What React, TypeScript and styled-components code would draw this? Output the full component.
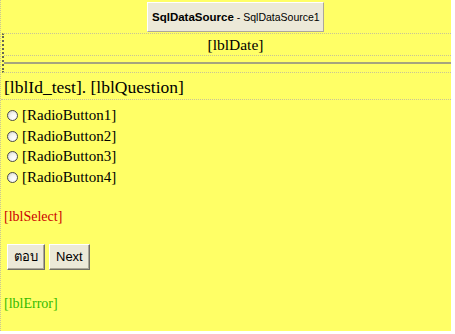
import React from 'react';
import styled, { createGlobalStyle } from 'styled-components';

const GlobalStyle = createGlobalStyle`
  html, body {
    margin: 0;
    padding: 0;
    background: #ffffff;
  }
`;

const radios = ['[RadioButton1]', '[RadioButton2]', '[RadioButton3]', '[RadioButton4]'];

const App: React.FC = () => {
  return (
    <>
      <GlobalStyle />
      <Page>
        <Header>
          <DataSource>
            <b>SqlDataSource</b>
            <span> - SqlDataSource1</span>
          </DataSource>
        </Header>
        <DateTable>
          <DateCell>[lblDate]</DateCell>
          <Rule />
        </DateTable>
        <Question>[lblId_test]. [lblQuestion]</Question>
        <RadioList>
          {radios.map((r) => (
            <RadioRow key={r}>
              <Radio />
              <span>{r}</span>
            </RadioRow>
          ))}
        </RadioList>
        <Label color="#cc0000" top={19}>[lblSelect]</Label>
        <Buttons>
          <Button>ตอบ</Button>
          <Button>Next</Button>
        </Buttons>
        <Label color="#33bb00" top={24}>[lblError]</Label>
      </Page>
    </>
  );
};

export default App;

const Page = styled.div`
  width: 451px;
  height: 331px;
  box-sizing: border-box;
  background: #ffff66;
  border-left: 1px dotted #c8c496;
  font-family: 'Liberation Serif', 'Times New Roman', serif;
  font-size: 15px;
  color: #000000;
`;

const Header = styled.div`
  display: flex;
  justify-content: center;
  padding: 2px 0 1px 19px;
  height: 33px;
  box-sizing: border-box;
`;

const DataSource = styled.div`
  display: flex;
  align-items: center;
  gap: 3px;
  height: 30px;
  width: 177px;
  box-sizing: border-box;
  padding: 0 4px;
  background: #ece9d8;
  border: 1px solid;
  border-color: #ffffff #aca899 #aca899 #ffffff;
  font-family: 'Liberation Sans', Tahoma, sans-serif;
  font-size: 11px;
  color: #000000;
  white-space: nowrap;

  b {
    font-size: 11.5px;
  }

  span {
    font-size: 10.5px;
  }
`;

const DateTable = styled.div`
  border-top: 1px dotted #c8c496;
  border-left: 2px dotted #666655;
  margin-left: 1px;
  padding-bottom: 8px;
  border-bottom: 1px dotted #c8c496;
`;

const DateCell = styled.div`
  height: 21px;
  line-height: 22px;
  font-size: 15.5px;
  text-align: center;
  border-bottom: 1px dotted #c8c496;
  padding-left: 16px;
`;

const Rule = styled.div`
  margin-top: 6px;
  height: 2px;
  background: #a6a47e;
`;

const Question = styled.div`
  padding: 4px 0 0 3px;
  font-size: 17.5px;
  height: 27px;
  box-sizing: border-box;
  border-bottom: 1px dotted #c8c496;
  white-space: nowrap;
`;

const RadioList = styled.div`
  padding: 5px 0 0 6px;
  display: flex;
  flex-direction: column;
`;

const RadioRow = styled.div`
  display: flex;
  align-items: center;
  gap: 4px;
  height: 20.7px;
`;

const Radio = styled.span`
  width: 11px;
  height: 11px;
  box-sizing: border-box;
  border-radius: 50%;
  border: 1px solid #4a4a4a;
  background: radial-gradient(circle at 65% 65%, #ffffff 0%, #f4f4f0 45%, #c8c8c0 100%);
`;

const Label = styled.div<{ color: string; top: number }>`
  color: ${(p) => p.color};
  font-size: 14px;
  padding-left: 3px;
  margin-top: ${(p) => p.top}px;
  height: 20px;
  line-height: 20px;
`;

const Buttons = styled.div`
  display: flex;
  gap: 4px;
  padding: 17px 0 0 6px;
`;

const Button = styled.button`
  height: 26px;
  min-width: 38px;
  padding: 0 6px;
  background: #ece9d8;
  border: 1px solid;
  border-color: #ffffff #716f64 #716f64 #ffffff;
  box-shadow: inset -1px -1px 0 #aca899;
  font-family: 'Liberation Sans', Tahoma, 'DejaVu Sans', sans-serif;
  font-size: 13px;
  color: #000000;
  border-radius: 0;
`;
